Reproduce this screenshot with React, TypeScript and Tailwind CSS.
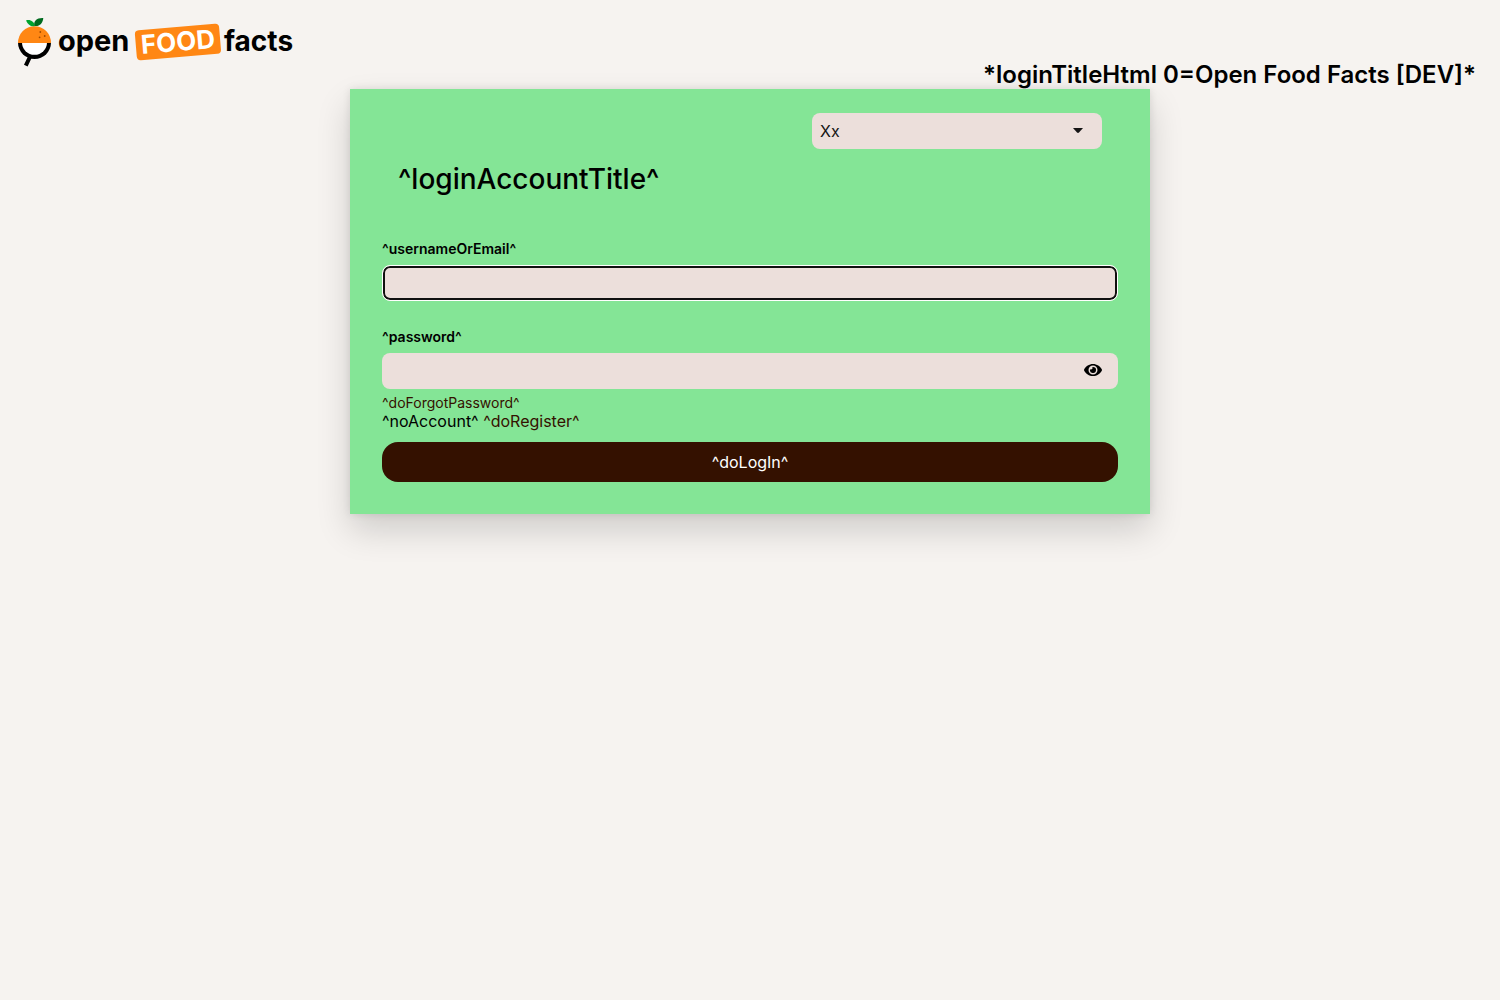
import { useState } from "react";

function Logo() {
  return (
    <svg
      width="280"
      height="52"
      viewBox="16 16 280 52"
      role="img"
      aria-label="Open Food Facts"
      className="block shrink-0 font-['Inter',sans-serif]"
    >
      <path d="M31 54 L29.4 58 L25.8 65.6" fill="none" stroke="#000" strokeWidth="4" />
      <path d="M18 42.5 H51 A16.5 16.6 0 0 1 18 42.5 Z" fill="#000" />
      <path d="M22 42.5 H47 A12.5 12.3 0 0 1 22 42.5 Z" fill="#fff" />
      <path d="M18 43 A16.5 16.8 0 0 1 51 43 Z" fill="#ff8714" />
      <g fill="#a14a00">
        <circle cx="40.3" cy="32" r="0.9" />
        <circle cx="39.6" cy="37.3" r="0.9" />
        <circle cx="44.7" cy="36" r="0.9" />
      </g>
      <path d="M26 20.4 C30 19 34.5 21.5 34.8 26 C31 26.8 28 24.8 26 20.4 Z" fill="#00a32e" />
      <path d="M34.5 26 C33 21 37 17.6 43.3 18 C42.8 23.5 39.3 26.8 34.5 26 Z" fill="#006b1f" />
      <text x="58" y="51" fontSize="29" fontWeight="700" fill="#000">
        open
      </text>
      <g transform="rotate(-4.8 178 42)">
        <rect x="135.7" y="27" width="84.5" height="30" rx="4" fill="#ff8714" />
        <text x="178" y="51" fontSize="26" fontWeight="700" fill="#fff" textAnchor="middle">
          FOOD
        </text>
      </g>
      <text x="224" y="51" fontSize="28" fontWeight="700" fill="#000">
        facts
      </text>
    </svg>
  );
}

function EyeIcon() {
  return (
    <svg width="18" height="16" viewBox="0 0 576 512" fill="currentColor" aria-hidden="true">
      <path d="M572.52 241.4C518.29 135.59 410.93 64 288 64S57.68 135.64 3.48 241.41a32.35 32.35 0 0 0 0 29.19C57.71 376.41 165.07 448 288 448s230.32-71.64 284.52-177.41a32.35 32.35 0 0 0 0-29.19zM288 400a144 144 0 1 1 144-144 143.93 143.93 0 0 1-144 144zm0-240a95.31 95.31 0 0 0-25.31 3.79 47.85 47.85 0 0 1-66.9 66.9A95.78 95.78 0 1 0 288 160z" />
    </svg>
  );
}

export default function App() {
  const [shown, setShown] = useState(false);

  return (
    <div className="min-h-screen bg-[#f6f3f0] font-['Inter',sans-serif] text-base text-black">
      <header className="flex items-end justify-between pl-4 pr-6 pt-4">
        <div className="pb-5">
          <Logo />
        </div>
        <h1 className="text-2xl leading-[26px] font-semibold">
          *loginTitleHtml 0=Open Food Facts [DEV]*
        </h1>
      </header>

      <main className="mx-auto mt-px max-w-[800px] bg-[#84e596] shadow-[0_16px_32px_0_rgba(3,3,3,0.16),0_0_8px_0_rgba(3,3,3,0.1)]">
        <div className="px-12 pt-6">
          <div className="relative ml-auto w-[290px]">
            <select
              aria-label="Language"
              className="h-9 w-full appearance-none rounded-lg bg-[#ecdfdb] px-2 text-base text-[#151515]"
            >
              <option>Xx</option>
            </select>
            <svg
              width="10"
              height="5"
              viewBox="0 0 10 5"
              aria-hidden="true"
              className="pointer-events-none absolute top-[15px] right-[19px]"
            >
              <path d="M0 0H10L6 4.6Q5 5.4 4 4.6Z" fill="#151515" />
            </svg>
          </div>
          <h2 className="mt-3 text-[28px] leading-9 font-medium">^loginAccountTitle^</h2>
        </div>

        <form className="px-8 pt-10 pb-8" onSubmit={(e) => e.preventDefault()}>
          <label htmlFor="username" className="block h-7 pt-0.5 text-sm font-semibold">
            ^usernameOrEmail^
          </label>
          <input
            id="username"
            type="text"
            className="block h-9 w-full rounded-lg border border-white bg-[#ecdfdb] px-2 shadow-[inset_0_0_0_2px_#101010] outline-none"
          />

          <label htmlFor="password" className="mt-6 block h-7 pt-0.5 text-sm font-semibold">
            ^password^
          </label>
          <div className="flex h-9 rounded-lg bg-[#ecdfdb]">
            <input
              id="password"
              type={shown ? "text" : "password"}
              className="min-w-0 flex-1 bg-transparent px-2 outline-none"
            />
            <button
              type="button"
              aria-label="Show password"
              onClick={() => setShown(!shown)}
              className="flex w-[50px] items-center justify-center pb-0.5"
            >
              <EyeIcon />
            </button>
          </div>

          <div className="mt-1 text-sm">
            <a href="#forgot" className="text-[#341100]">
              ^doForgotPassword^
            </a>
          </div>
          <div className="leading-4">
            ^noAccount^{" "}
            <a href="#register" className="text-[#341100]">
              ^doRegister^
            </a>
          </div>
          <button
            type="submit"
            className="mt-[13px] block h-10 w-full rounded-2xl bg-[#341100] text-base text-white"
          >
            ^doLogIn^
          </button>
        </form>
      </main>
    </div>
  );
}
